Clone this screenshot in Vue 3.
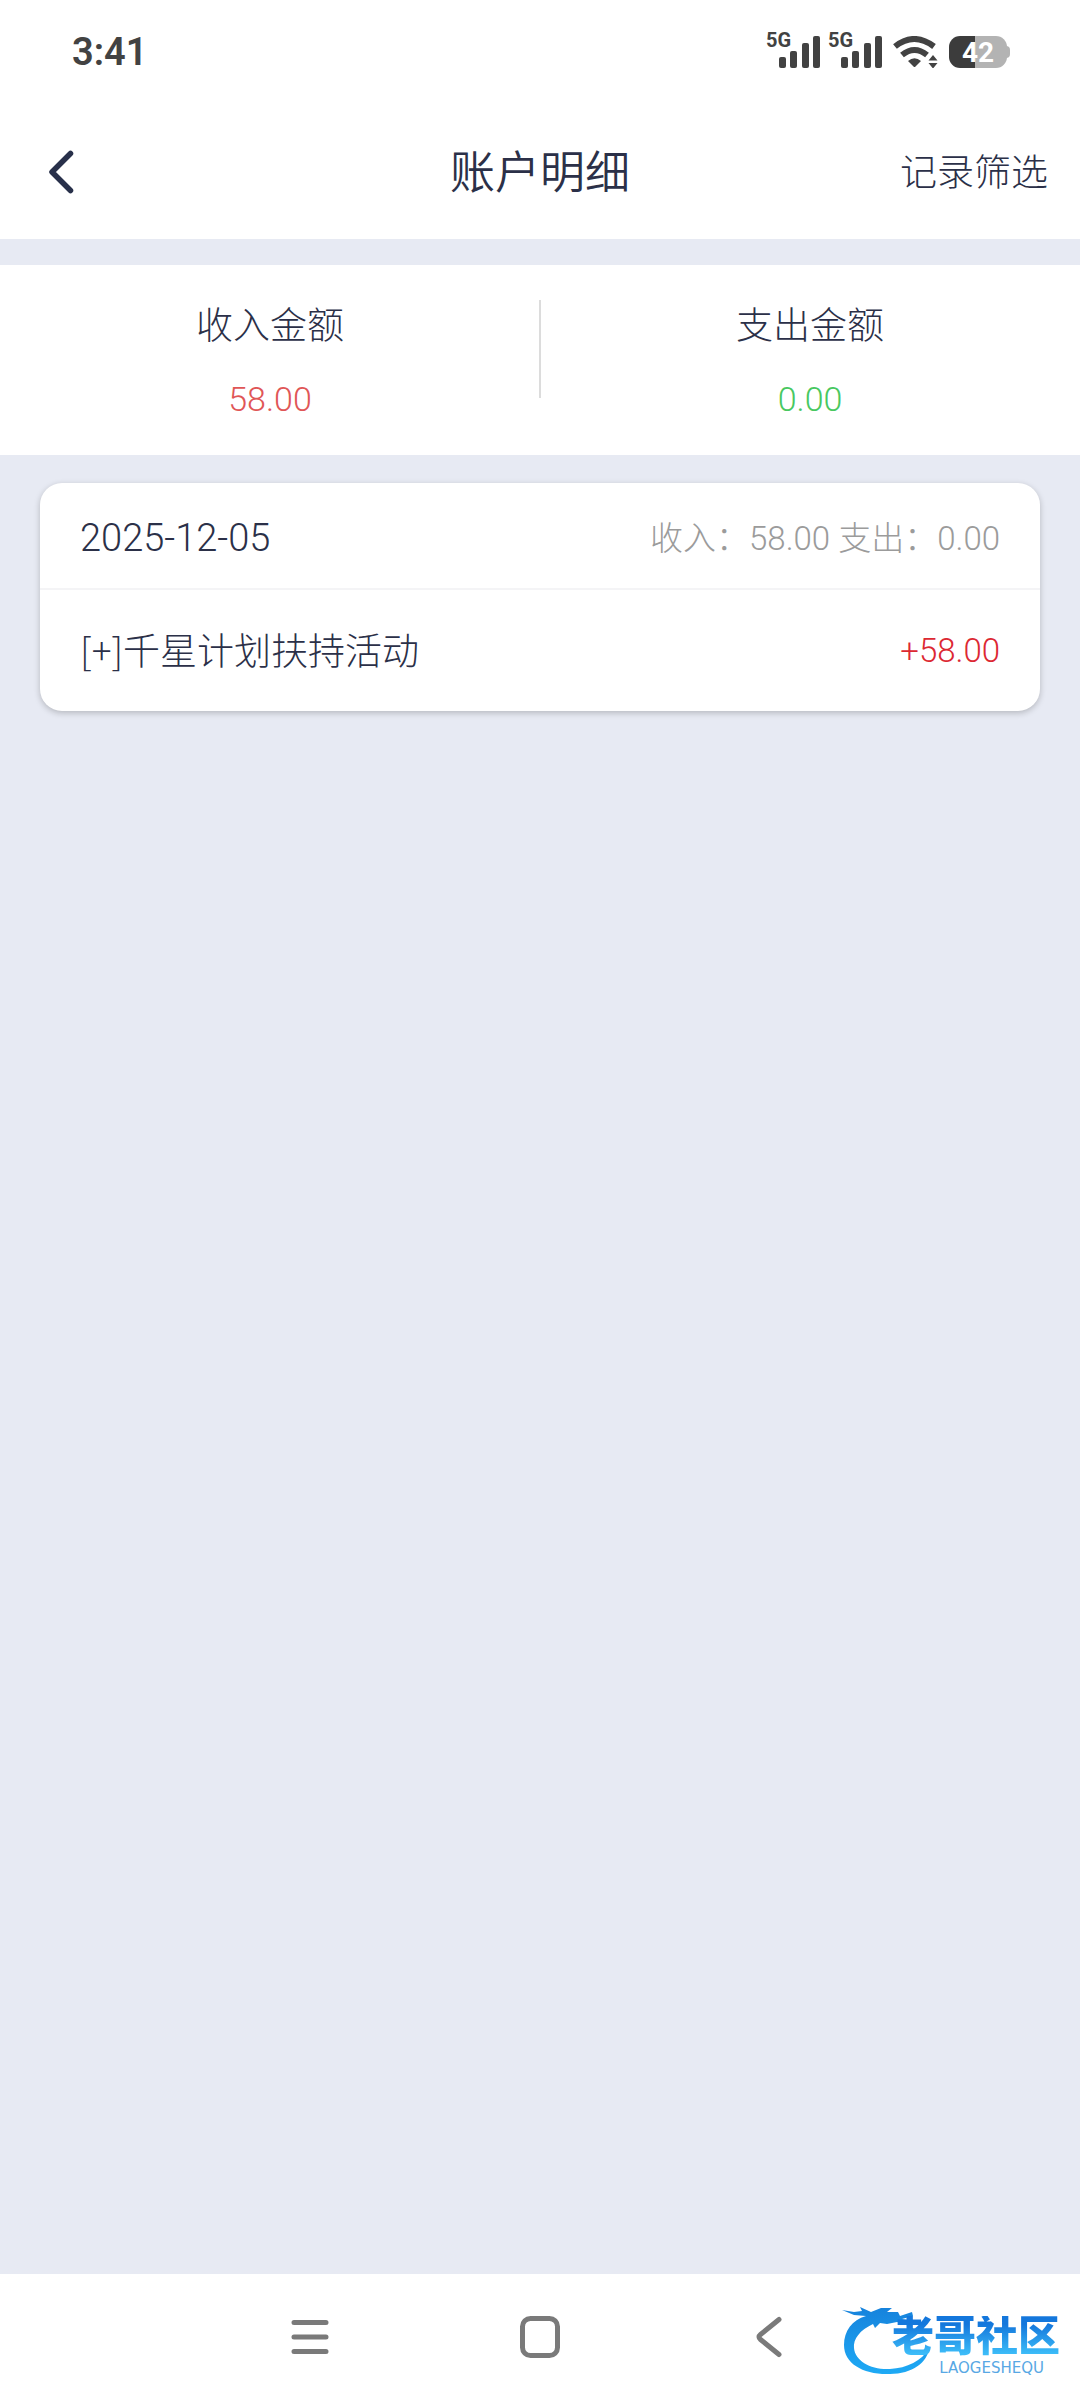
<script setup>
const bars = [
  { x: 0, h: 11 },
  { x: 11, h: 17 },
  { x: 23, h: 25 },
  { x: 34, h: 32 },
]
const records = [{ name: '[+]千星计划扶持活动', amount: '+58.00' }]
</script>

<template>
  <div class="page">
    <div class="status">
      <span class="time">3:41</span>
      <div class="indicators">
        <div v-for="n in 2" :key="n" class="signal">
          <span class="net">5G</span>
          <svg width="41" height="32" viewBox="0 0 41 32" aria-hidden="true">
            <rect v-for="b in bars" :key="b.x" :x="b.x" :y="32 - b.h" width="7" :height="b.h" rx="2" fill="#424242" />
          </svg>
        </div>
        <svg class="wifi" width="46" height="32" viewBox="0 0 46 32" aria-hidden="true">
          <g fill="none" stroke="#424242" stroke-width="6">
            <path d="M2 10.500Q21 -4.500 41 10.500" />
            <path d="M9 19Q21.500 9 34 19" />
          </g>
          <path d="M15 25Q21.500 19.500 28 25L22.500 30.500Q21.500 31.500 20.500 30.500Z" fill="#424242" />
          <path d="M35.500 24.500L40 19L44.500 24.500ZM35.500 27L40 32.500L44.500 27Z" fill="#424242" />
        </svg>
        <div class="battery"><span>42</span></div>
      </div>
    </div>

    <header class="header">
      <button class="back" type="button" aria-label="返回">
        <svg width="26" height="46" viewBox="0 0 26 46"><path d="M22.500 4.500L4 23L22.500 41.500" fill="none" stroke="#28304a" stroke-width="5.500" stroke-linecap="round" stroke-linejoin="round" /></svg>
      </button>
      <h1>账户明细</h1>
      <button class="filter" type="button">记录筛选</button>
    </header>

    <section class="summary">
      <div class="total">
        <span>收入金额</span>
        <strong class="income">58.00</strong>
      </div>
      <div class="total">
        <span>支出金额</span>
        <strong class="expense">0.00</strong>
      </div>
    </section>

    <main class="content">
      <article class="card">
        <div class="day">
          <time datetime="2025-12-05">2025-12-05</time>
          <span class="day-sum">收入：58.00 支出：0.00</span>
        </div>
        <div v-for="r in records" :key="r.name" class="record">
          <span class="name">{{ r.name }}</span>
          <span class="amount">{{ r.amount }}</span>
        </div>
      </article>
    </main>

    <nav class="nav">
      <button type="button" aria-label="菜单">
        <svg width="44" height="44" viewBox="0 0 44 44"><path d="M6 7.500H38M6 22H38M6 36.500H38" /></svg>
      </button>
      <button type="button" aria-label="主页">
        <svg width="44" height="44" viewBox="0 0 44 44"><rect x="4.500" y="3.500" width="35" height="37" rx="8" /></svg>
      </button>
      <button type="button" aria-label="后退">
        <svg width="44" height="44" viewBox="0 0 44 44"><path d="M31 4.500L12.500 19.500Q9.500 22 12.500 24.500L31 39.500" /></svg>
      </button>
      <div class="brand">
        <svg class="dragon" width="92" height="72" viewBox="0 0 92 72" aria-hidden="true">
          <defs>
            <linearGradient id="scale" x1="0" y1="0" x2="0" y2="1">
              <stop offset="0" stop-color="#1682dc" />
              <stop offset="1" stop-color="#1eaaf5" />
            </linearGradient>
          </defs>
          <path fill="url(#scale)" d="M0 6L12 8L20 7L18 3L29 8L39 4L50 4L45 8L56 8L58 12L70 8L71 12L60 15L70 17L67 21L55 18L45 20L38 19L33 24L31 20C18 26 11 35 12 44C13 57 29 66 48 65C65 64 80 57 87 44C86 58 70 70 48 70C22 71 2 60 2 41C2 27 10 16 24 12L12 11Z" />
        </svg>
        <span class="brand-name">老哥社区</span>
        <span class="brand-latin">LAOGESHEQU</span>
      </div>
    </nav>
  </div>
</template>

<style>
body {
  margin: 0;
  background: #e7eaf3;
}
</style>

<style scoped>
.page {
  display: flex;
  flex-direction: column;
  min-height: 100vh;
  color: #2b3048;
  font-family: Roboto, "Noto Sans CJK SC", sans-serif;
  font-weight: 300;
  background: #e7eaf3;
}
button {
  padding: 0;
  border: 0;
  background: none;
  color: inherit;
  font: inherit;
}
svg {
  display: block;
}
.status {
  display: flex;
  justify-content: space-between;
  align-items: center;
  height: 104px;
  padding: 0 73px 0 72px;
  background: #fff;
}
.time {
  color: #424242;
  font-size: 38px;
  font-weight: 600;
}
.indicators {
  display: flex;
  align-items: center;
}
.signal {
  position: relative;
  margin-right: 8px;
  padding-left: 13px;
}
.net {
  position: absolute;
  left: 0;
  top: -6px;
  color: #424242;
  font-size: 20px;
  font-weight: 700;
  line-height: 20px;
}
.wifi {
  margin: 0 10px 0 3px;
}
.battery {
  position: relative;
  width: 58px;
  height: 32px;
  border-radius: 11px;
  background: linear-gradient(90deg, #3c3c3c 45%, #b3b3b3 45%);
  color: #fff;
  font-size: 28px;
  font-weight: 700;
  line-height: 33px;
  text-align: center;
}
.battery::after {
  content: "";
  position: absolute;
  left: 57px;
  top: 10px;
  width: 4px;
  height: 12px;
  border-radius: 0 4px 4px 0;
  background: #b3b3b3;
}
.header {
  display: grid;
  grid-template-columns: 1fr auto 1fr;
  align-items: center;
  height: 135px;
  padding: 0 32px;
  background: #fff;
}
.back {
  justify-self: start;
  padding-left: 16px;
}
.header h1 {
  margin: 0;
  padding-bottom: 4px;
  font-size: 45px;
  font-weight: 350;
}
.filter {
  justify-self: end;
  padding-bottom: 4px;
  font-size: 37px;
}
.summary {
  display: flex;
  margin-top: 26px;
  height: 190px;
  background: #fff;
}
.total {
  position: relative;
  display: flex;
  flex: 1;
  flex-direction: column;
  align-items: center;
  padding-top: 34px;
  font-size: 37px;
  line-height: 56px;
}
.total + .total::before {
  content: "";
  position: absolute;
  left: -1px;
  top: 35px;
  width: 2px;
  height: 98px;
  background: #dcdcdc;
}
.total strong {
  margin-top: 16px;
  font-size: 34px;
  font-weight: 300;
}
.income {
  color: #e05656;
}
.expense {
  color: #48c860;
}
.content {
  flex: 1;
  padding: 28px 40px;
}
.card {
  border-radius: 22px;
  background: #fff;
  box-shadow: 0 2px 6px rgba(0, 0, 0, 0.22);
}
.day,
.record {
  display: flex;
  justify-content: space-between;
  align-items: center;
  padding: 0 40px;
}
.day {
  height: 105px;
  border-bottom: 2px solid #f4f4f6;
  font-size: 38px;
}
.day time {
  padding-top: 4px;
}
.day-sum {
  color: #9b9b9b;
  font-size: 33px;
}
.record {
  height: 121px;
  font-size: 37px;
}
.name {
  padding-bottom: 4px;
  font-family: "Noto Sans CJK SC", sans-serif;
}
.amount {
  color: #dc2832;
  font-size: 33px;
}
.nav {
  position: relative;
  display: flex;
  justify-content: center;
  align-items: center;
  gap: 186px;
  height: 126px;
  background: #fff;
}
.nav button svg {
  fill: none;
  stroke: #7a7a7a;
  stroke-width: 5;
  stroke-linecap: round;
}
.brand {
  position: absolute;
  right: 18px;
  bottom: 24px;
  width: 220px;
  height: 72px;
}
.dragon {
  position: absolute;
  left: 0;
  top: 0;
}
.brand-name {
  position: absolute;
  right: 2px;
  top: 12px;
  background: linear-gradient(#1477dc 20%, #3cbcf8 90%);
  background-clip: text;
  color: transparent;
  font-size: 42px;
  font-weight: 900;
  line-height: 42px;
}
.brand-latin {
  position: absolute;
  right: 18px;
  bottom: 0;
  color: #58a8e4;
  font-family: "DejaVu Sans", sans-serif;
  font-size: 15px;
  font-weight: 400;
  line-height: 15px;
}
</style>
